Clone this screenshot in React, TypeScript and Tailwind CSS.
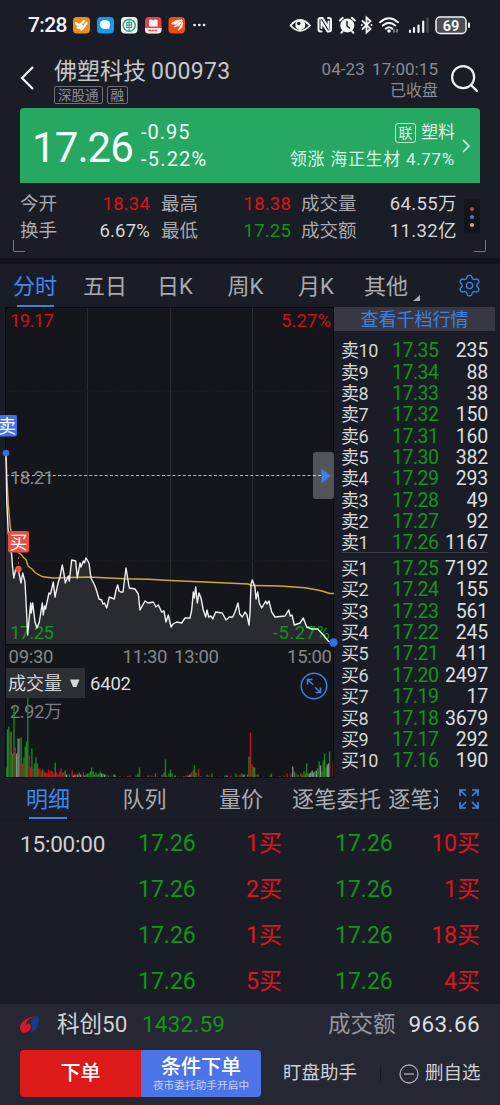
import React from 'react';
import { Settings, Search } from 'lucide-react';

interface Order {
    label: string;
    price: string;
    volume: string;
}

interface Trade {
    time: string;
    price: string;
    volume: string;
    price2: string;
    volume2: string;
}

const sells: Order[] = [
    { label: '卖10', price: '17.35', volume: '235' },
    { label: '卖9', price: '17.34', volume: '88' },
    { label: '卖8', price: '17.33', volume: '38' },
    { label: '卖7', price: '17.32', volume: '150' },
    { label: '卖6', price: '17.31', volume: '160' },
    { label: '卖5', price: '17.30', volume: '382' },
    { label: '卖4', price: '17.29', volume: '293' },
    { label: '卖3', price: '17.28', volume: '49' },
    { label: '卖2', price: '17.27', volume: '92' },
    { label: '卖1', price: '17.26', volume: '1167' },
];

const buys: Order[] = [
    { label: '买1', price: '17.25', volume: '7192' },
    { label: '买2', price: '17.24', volume: '155' },
    { label: '买3', price: '17.23', volume: '561' },
    { label: '买4', price: '17.22', volume: '245' },
    { label: '买5', price: '17.21', volume: '411' },
    { label: '买6', price: '17.20', volume: '2497' },
    { label: '买7', price: '17.19', volume: '17' },
    { label: '买8', price: '17.18', volume: '3679' },
    { label: '买9', price: '17.17', volume: '292' },
    { label: '买10', price: '17.16', volume: '190' },
];

const trades: Trade[] = [
    { time: '15:00:00', price: '17.26', volume: '1买', price2: '17.26', volume2: '10买' },
    { time: '', price: '17.26', volume: '2买', price2: '17.26', volume2: '1买' },
    { time: '', price: '17.26', volume: '1买', price2: '17.26', volume2: '18买' },
    { time: '', price: '17.26', volume: '5买', price2: '17.26', volume2: '4买' },
];

const pricePoints =
    '6,453 6.7,500 8.3,533 11.7,555 12.5,566 13.8,578 15.5,570 17,568 19,573 21,583 22.7,573 25,582 26.3,607 27.7,635 29.3,617 30.7,603 31.3,613 32.7,603 35,622 37,628 39.3,622 42.3,603 43.3,615 44.5,606 45.5,609 49,593 50.5,594 53.3,582 55,597 58.3,582 60,577 62.3,565 64,574 65.3,583 68.3,576 69.3,581 71.7,560 75.7,561 77.3,578 80,563 81,567 83.3,561 84.5,563 86,558 89,563 91,578 95,586 97,592 99,599 101.7,600 103,604 104.5,603 106.7,608 109.3,597 114.3,599 116,590 117.7,585 119,591 120.7,592 123,592 126,568 129.3,588 135,589 138.3,594 140,610 145,601 148,603 153.3,602 156,607 158.3,605 161.7,612 164,611 166,622 168.3,615 171,627 173,624 176.7,622 181.7,623 185,618 190,618 191.7,610 193.3,592 194.3,598 195.7,587 197.3,603 199,593 201,598 203.3,610 205.7,617 207,610 208.7,617 211,616 212.7,619 215.7,612 222.3,613 226,620 229.3,617 232.7,617 235,612 238,603 239.7,614 242.3,617 245,612 247,615 249,625 250,613 251,584 252.3,580 255,587 256,599 257.7,592 259.3,603 261.7,608 265.7,601 267,604 269,601 271.7,612 275,617 285,616 288.7,610 290.3,616 292,615 294.3,625 300,623 303.3,618 306.7,627 311.7,629 317.7,629 323.3,635 328.3,641 332,643';

const averagePoints =
    '6,453 7,480 8.3,505 10,524 12,539 15,549 19,553 21,554.5 24,558 26,559.5 28,566 32,569 35,572.5 39,575 43,576.8 53,578 70,577.5 88,577 125,578.8 148,579.3 170,580.5 205,582 248,584 252,585.5 280,586 305,587.8 315,589.5 322,591 330,593.5 334,593.5';

// [x, height, colour]: g falling, r rising, w flat
const volumeBars: [number, number, string][] = [
    [6.5, 10, 'g'], [7.5, 48, 'g'], [8.8, 51, 'g'], [10, 45, 'r'], [11.2, 46, 'g'], [12.5, 24, 'g'], [14, 72, 'g'], [15.3, 30, 'r'], [16.7, 24, 'w'], [18.2, 39, 'w'],
    [19.6, 39, 'g'], [21.2, 40, 'g'], [22.6, 14, 'r'], [24, 20, 'g'], [25.3, 31, 'g'], [26.5, 36, 'g'], [27.8, 80, 'g'], [29.2, 22, 'r'], [30.5, 10, 'r'], [31.9, 29, 'g'],
    [33.2, 9, 'r'], [34.6, 14, 'g'], [36, 20, 'g'], [37.4, 14, 'g'], [38.7, 9, 'r'], [40, 9, 'r'], [41.4, 6, 'r'], [42.8, 8, 'g'], [44.2, 6, 'r'], [45.6, 5, 'r'],
    [47, 4, 'r'], [48.4, 8, 'r'], [49.8, 6, 'r'], [51.2, 7, 'r'], [52.6, 6, 'r'], [54, 4, 'r'], [55.3, 15, 'g'], [56.8, 5, 'r'], [58.2, 3, 'r'], [59.6, 6, 'r'],
    [61, 9, 'r'], [62.4, 5, 'r'], [63.8, 5, 'r'], [65.2, 7, 'g'], [66.6, 3, 'w'], [69.4, 3, 'g'], [72.2, 7, 'r'], [73.6, 2, 'w'], [75, 3, 'w'], [76.4, 3, 'r'],
    [77.8, 3, 'w'], [79.2, 5, 'g'], [80.6, 3, 'w'], [83.4, 6, 'r'], [84.8, 2, 'w'], [86.2, 3, 'g'], [87.6, 4, 'g'], [89, 4, 'g'], [90.4, 6, 'g'], [91.8, 10, 'g'],
    [93.2, 6, 'g'], [94.6, 3, 'g'], [96, 5, 'g'], [97.4, 3, 'g'], [98.8, 4, 'g'], [100.2, 6, 'g'], [101.6, 4, 'w'], [103, 4, 'g'], [104.4, 3, 'w'], [105.8, 3, 'g'],
    [108.6, 2, 'g'], [111.4, 1, 'r'], [114.2, 3, 'w'], [115.6, 2, 'g'], [119.8, 1, 'w'], [124, 1, 'r'], [128, 1, 'w'], [130, 2, 'r'], [136, 2, 'g'], [138, 4, 'g'], [139.5, 10, 'g'],
    [144, 1, 'r'], [148, 2, 'g'], [151, 2, 'r'], [153, 1, 'g'], [155.5, 4, 'g'], [158, 1, 'r'], [162, 3, 'g'], [164, 5, 'g'], [165.5, 18, 'g'], [167, 2, 'r'],
    [169, 4, 'g'], [170.5, 8, 'g'], [172, 4, 'g'], [175, 2, 'w'], [178, 1, 'r'], [181, 1, 'r'], [184, 1, 'w'], [186, 2, 'r'], [188, 2, 'w'], [190, 3, 'w'],
    [191.5, 5, 'r'], [193, 7, 'r'], [194.4, 12, 'g'], [196, 5, 'g'], [198.5, 9, 'r'], [201, 1, 'w'], [207, 3, 'g'], [209, 2, 'r'], [212, 4, 'g'], [215, 1, 'r'],
    [220, 1, 'r'], [225, 2, 'g'], [227, 2, 'w'], [231, 2, 'r'], [236, 4, 'g'], [238, 2, 'r'], [240, 3, 'r'], [242, 4, 'g'], [244, 3, 'w'], [247.5, 3, 'g'],
    [249, 21, 'g'], [250.5, 45, 'r'], [252, 13, 'r'], [253.3, 11, 'g'], [254.6, 10, 'g'], [256, 3, 'r'], [258, 3, 'g'], [264, 1, 'r'], [270, 2, 'g'], [271.5, 4, 'g'],
    [277, 1, 'r'], [280, 1, 'w'], [284, 2, 'r'], [287, 4, 'r'], [291, 4, 'r'], [292.8, 11, 'w'], [294.3, 6, 'g'], [296, 4, 'r'], [298, 3, 'g'], [301, 4, 'g'],
    [302.5, 3, 'r'], [304, 6, 'g'], [305.3, 4, 'g'], [306.7, 14, 'g'], [308, 4, 'g'], [309.5, 4, 'w'], [310.8, 5, 'w'], [312.2, 7, 'w'], [313.6, 5, 'w'], [315, 6, 'g'],
    [316.4, 7, 'w'], [317.8, 9, 'g'], [319.2, 16, 'g'], [320.6, 12, 'w'], [322, 6, 'g'], [323.2, 17, 'g'], [324.6, 24, 'g'], [326, 10, 'g'], [327.3, 13, 'w'], [328.6, 14, 'w'], [329.6, 26, 'g'], [333.2, 16, 'r'],
];

const barColors: Record<string, string> = { g: '#178a1f', r: '#c2161d', w: '#8d8e8e' };

function StatusIcons() {
    return (
        <svg width="182" height="22" viewBox="289 14 182 22" fill="none" stroke="#f2f3f5" strokeLinecap="round">
            {/* eye */}
            <path d="M290.5 25.5Q300 14.5 310 25.5Q300 36 290.5 25.5Z" strokeWidth="1.8" />
            <circle cx="300.3" cy="25" r="5" fill="#f2f3f5" stroke="none" />
            <circle cx="298.8" cy="23.5" r="1.7" fill="#1b1d26" stroke="none" />
            {/* nfc */}
            <path d="M321.500 31.500h-1q-2 0-2-2v-9.500q0-2 2-2h2l6 9.500v-6M328 18h1q2 0 2 2v9.500q0 2-2 2h-1.500l-6-9.500v6" strokeWidth="2" />
            {/* alarm */}
            <circle cx="347.3" cy="25.5" r="7" fill="#f2f3f5" stroke="none" />
            <path d="M339.8 20.5l3-2.700M354.8 20.5l-3-2.700M342.5 31.5l-1.200 1.300M352.2 31.5l1.200 1.300" strokeWidth="2" />
            <path d="M347 21.5v4.500l2.500 2" stroke="#1b1d26" strokeWidth="1.5" />
            {/* bluetooth */}
            <path d="M362.5 21l8 8-4 3.500V17.500l4 3.500-8 8" strokeWidth="1.8" />
            <path d="M361.8 25h.1M371.4 25h.1" strokeWidth="1.8" />
            {/* wifi */}
            <path d="M380 22.2q9-8 18 0M382.8 25.6q6.200-5.400 12.400 0M385.8 28.6q3.200-2.600 6.400 0" strokeWidth="2" />
            <circle cx="389" cy="31" r="1.8" fill="#f2f3f5" stroke="none" />
            <path d="M394 29.5v2.500M397 29.500v2.500" strokeWidth="1.4" stroke="#a1a3a8" />
            {/* signal */}
            <path d="M410 30.5v1.500M414 28v4M418.5 25.5v6.500M423.2 21.5v10.500" strokeWidth="2.2" />
            <path d="M427.5 18.5v13.500" strokeWidth="2.2" stroke="#4b4d55" />
            {/* battery */}
            <rect x="436" y="17" width="30" height="16.5" rx="4" fill="#4b4d55" strokeWidth="1.5" />
            <path d="M469 23.5v3.500" strokeWidth="2" />
            <text x="451" y="30.5" fontSize="14.5" fontWeight="700" textAnchor="middle" fill="#f2f3f5" stroke="none">69</text>
        </svg>
    );
}

function AppIcons() {
    return (
        <svg width="135" height="18" viewBox="72 16 135 18" fill="none" strokeLinecap="round">
            <rect x="73" y="17" width="17" height="16.5" rx="4" fill="#ea8d1f" />
            <path d="M76 23q2 3 4.500 1.500l3.500-3.500M77.500 27.500q2.500 1 4.500-1.500M81.500 29.500q1 0 5-6.500" stroke="#fff" strokeWidth="2.3" strokeLinejoin="round" />
            <rect x="97" y="17" width="17" height="16.5" rx="4" fill="#1598ee" />
            <ellipse cx="105" cy="24.5" rx="5.2" ry="4.5" fill="#fff" />
            <path d="M106 27l3.500 2.500-.3-4z" fill="#fff" />
            <rect x="121" y="17" width="16.5" height="16.5" rx="4" fill="#f2f7f4" />
            <circle cx="129.2" cy="25.2" r="6" stroke="#37a58a" strokeWidth="1.5" />
            <path d="M129.2 20v10.500M126.8 22.500v5h4.800v-5zM126.800 25h4.800" stroke="#37a58a" strokeWidth="1.200" />
            <rect x="145" y="17" width="16.5" height="16.5" rx="4" fill="#e8404c" />
            <path d="M145 28h16.500v2q0 3.500-4 3.500h-8.500q-4 0-4-3.500z" fill="#f7e7e8" />
            <path d="M149 20q2.500-1 4.200.4 1.800-1.400 4.300-.4v6.500h-8.500z" fill="#fff" />
            <path d="M149 30.5h9" stroke="#e8404c" strokeWidth="1.6" strokeDasharray="1.2 2" />
            <rect x="168.5" y="17" width="16.5" height="16.5" rx="4" fill="#ef4b12" />
            <path d="M171.5 23.5q4-4 10.500-3.500l-6 4zM174.5 26.5l8-6-3.500 5zM178.5 30l4-8-.5 5z" fill="#fff" stroke="#fff" strokeWidth=".8" strokeLinejoin="round" />
            <path d="M194.5 25h.1M199.3 25h.1M204 25h.1" stroke="#f2f3f5" strokeWidth="2.600" />
        </svg>
    );
}

function PriceChart() {
    return (
        <svg className="block overflow-visible" width="334" height="361" viewBox="0 307 334 361">
            <rect x="5" y="307" width="329" height="361" fill="#15161b" />
            <path d="M87.5 308V644M170.5 308V644M252.5 308V644" stroke="#2c2d33" />
            <path d="M6 391.5H333M6 560.5H333" stroke="#202127" strokeDasharray="1 2" />
            <polygon points={`6,644 ${pricePoints} 333,644`} fill="#2a2b30" />
            <path d="M5.5 668V307.5H333.5V668M5 644.5H334" stroke="#0a0b0f" fill="none" />
            <g fontSize="18.5">
                <text x="10" y="326.5" fill="#d40d14" textLength="44">19.17</text>
                <text x="281" y="326.5" fill="#d40d14" textLength="50">5.27%</text>
                <text x="10" y="483.5" fill="#8b8c90" textLength="44">18.21</text>
                <text x="10" y="639" fill="#0f9818" textLength="44">17.25</text>
                <text x="273" y="639" fill="#0f9018" textLength="57">-5.27%</text>
            </g>
            <path d="M6 475.5H333" stroke="#b7b8ba" strokeDasharray="3 2.2" />
            <rect x="313" y="452" width="21" height="47" rx="3" fill="#5e5f63" fillOpacity=".85" />
            <path d="M313 475.5h8" stroke="#d0d1d3" strokeDasharray="3 2.2" />
            <path d="M321.5 468.5L330.5 476L321.5 483.5Z" fill="#3b82f0" />
            <polyline points={averagePoints} fill="none" stroke="#cda93c" strokeWidth="1.4" />
            <polyline points={pricePoints} fill="none" stroke="#f0f0f0" strokeWidth="1.4" strokeLinejoin="round" />
            <path d="M18.5 552v15" stroke="#b33a32" strokeDasharray="2 3" />
            <circle cx="6" cy="453" r="3.3" fill="#3d6be0" />
            <circle cx="18.5" cy="569" r="3.2" fill="#ee4f42" />
            <circle cx="333.5" cy="642.5" r="4.2" fill="#2f6fe2" />
            <rect x="-5" y="415" width="22" height="21.5" rx="2" fill="#4471e8" />
            <text x="-2" y="432.5" fontSize="18" fill="#fff">卖</text>
            <rect x="8" y="531" width="21" height="21.5" rx="2" fill="#e84e42" />
            <text x="9.5" y="548.5" fontSize="18" fill="#fff">买</text>
            <g fontSize="18.5" fill="#86878c">
                <text x="8.5" y="662.5" textLength="45">09:30</text>
                <text x="122.5" y="662.5" textLength="45">11:30</text>
                <text x="174" y="662.5" textLength="45">13:00</text>
                <text x="287" y="662.5" textLength="45">15:00</text>
            </g>
        </svg>
    );
}

function VolumeChart() {
    return (
        <svg className="block" width="334" height="110" viewBox="0 668 334 110">
            <rect x="5" y="668" width="329" height="110" fill="#15161b" />
            <text x="10" y="717.5" fontSize="18" fill="#7d7e82" textLength="52">2.92万</text>
            {volumeBars.map(([x, h, c], i) => (
                <rect key={i} x={x - 0.7} y={777.5 - h} width="1.35" height={h} fill={barColors[c]} />
            ))}
            <path d="M5.5 668V777.5H333.5V668M5 667.5H334" stroke="#0a0b0f" fill="none" />
            <rect x="6" y="668" width="79" height="30" fill="#2e2f34" />
            <text x="8" y="689.5" fontSize="18" fill="#d5d6d9">成交量</text>
            <path d="M70 679.5H79.5L76.5 687H73Z" fill="#d5d6d9" />
            <text x="90" y="689.5" fontSize="18.5" fill="#dcdde0" textLength="41">6402</text>
            <g fill="none" stroke="#3f7fdf" strokeWidth="1.5">
                <circle cx="314" cy="686" r="12.8" />
                <path d="M307.5 684.5v-5h5M307.5 679.5l5.800 5.200M320.5 687.5v5h-5M320.5 692.5l-5.500-5.200" />
            </g>
        </svg>
    );
}

function OrderRows({ orders }: { orders: Order[] }) {
    return (
        <div>
            {orders.map((order) => (
                <div key={order.label} className="flex h-[21.35px] items-center text-[19.5px] leading-[21px]">
                    <span className="w-[51px] text-[18px] text-[#d5d6da] tracking-[-0.4px]">{order.label}</span>
                    <span className="w-[50px] text-[#11951b] tracking-[-0.5px]">{order.price}</span>
                    <span className="flex-1 text-right text-[#dcdde0] tracking-[-0.2px]">{order.volume}</span>
                </div>
            ))}
        </div>
    );
}

export default function App() {
    return (
        <div className="flex h-[1105px] w-[500px] flex-col overflow-hidden bg-[#1b1d26] font-[Roboto,'Noto_Sans_CJK_SC',sans-serif] whitespace-nowrap text-[#a9aab0]">
            {/* Status bar */}
            <div className="flex h-[50px] shrink-0 items-center justify-between pr-[29px] pl-7">
                <div className="flex items-center gap-[5px] text-[#f2f3f5]">
                    <span className="w-[39px] pt-[2px] text-[21px] font-medium tracking-[-0.6px]">7:28</span>
                    <AppIcons />
                </div>
                <StatusIcons />
            </div>

            {/* Title */}
            <div className="flex h-[58px] shrink-0 pr-[19px] pl-[19px]">
                <svg className="mt-[14px] w-[35px]" height="28" viewBox="0 0 35 28" fill="none" stroke="#f2f3f5" strokeWidth="2.2">
                    <path d="M14 3L3 14L14 25" />
                </svg>
                <div className="flex-1 pt-2">
                    <div className="flex h-7 items-center gap-[5px] text-[23px] leading-7 text-[#c6c7cb]">
                        <span>佛塑科技</span>
                        <span className="tracking-[0.3px]">000973</span>
                    </div>
                    <div className="flex gap-1 text-[13.5px] leading-4 text-[#8c8e96]">
                        <span className="h-[18px] rounded-[2px] border border-[#6c6e76] px-[3px]">深股通</span>
                        <span className="h-[18px] rounded-[2px] border border-[#6c6e76] px-[3px]">融</span>
                    </div>
                </div>
                <div className="pt-2 text-right text-[#898b93]">
                    <div className="h-[22px] text-[17px] leading-[22px] tracking-[0.05px] [word-spacing:3px]">04-23 17:00:15</div>
                    <div className="h-[21px] text-[16px] leading-[21px]">已收盘</div>
                </div>
                <Search className="mt-3 ml-2.5 h-[33px] w-[33px] text-[#eeeff1]" strokeWidth={1.6} />
            </div>

            {/* Price banner */}
            <div className="mx-5 flex h-[75px] shrink-0 items-center rounded-t-[4px] bg-[#27a862] pr-[9px] pl-3 text-[#f3fbf6]">
                <div className="w-[109px] pt-1 text-[42px] leading-none tracking-[-0.9px]">17.26</div>
                <div className="flex-1 pt-px text-[20px] leading-[27px]">
                    <div className="tracking-[1px]">-0.95</div>
                    <div className="tracking-[1.2px]">-5.22%</div>
                </div>
                <div className="pt-px text-right text-[17px] leading-[27px] text-[#d9f2e4]">
                    <div className="flex items-center justify-end gap-[5px]">
                        <span className="h-5 w-[21px] rounded-[3px] border border-[#bfe6cf] text-center text-[14px] leading-[18px]">联</span>
                        <span>塑料</span>
                    </div>
                    <div className="tracking-[0.7px]">领涨 海正生材 4.77%</div>
                </div>
                <svg className="ml-[7px]" width="9" height="16" viewBox="0 0 9 16" fill="none" stroke="#d9f2e4" strokeWidth="1.6">
                    <path d="M1 2L7 8L1 14" />
                </svg>
            </div>

            {/* Daily stats */}
            <div className="relative flex h-[75px] shrink-0 pt-2 pl-5 text-[18.5px] leading-[27px]">
                <div className="w-[82px]">
                    <div>今开</div>
                    <div>换手</div>
                </div>
                <div className="flex w-12 flex-col items-end tracking-[0.2px]">
                    <div className="text-[#d8141b]">18.34</div>
                    <div className="text-[#d5d6da]">6.67%</div>
                </div>
                <div className="ml-[11px] w-[82px]">
                    <div>最高</div>
                    <div>最低</div>
                </div>
                <div className="flex w-12 flex-col items-end tracking-[0.2px]">
                    <div className="text-[#d8141b]">18.38</div>
                    <div className="text-[#11951b]">17.25</div>
                </div>
                <div className="ml-2.5 w-[77px]">
                    <div>成交量</div>
                    <div>成交额</div>
                </div>
                <div className="w-[79px] text-right tracking-[0.4px] text-[#d5d6da]">
                    <div>64.55万</div>
                    <div>11.32亿</div>
                </div>
                <div className="mt-[8px] ml-[7px] flex h-[35px] w-4 flex-col items-center justify-center gap-1 rounded-[2px] bg-[#14151b]">
                    <i className="h-1 w-1 rounded-full bg-[#c8473d]" />
                    <i className="h-1 w-1 rounded-full bg-[#3b7fe6]" />
                    <i className="h-1 w-1 rounded-full bg-[#cfa88c]" />
                </div>
                <div className="absolute top-[57px] left-[13px] h-3 w-3 rounded-bl-[2px] border-b border-l border-[#777980]" />
                <div className="absolute top-[57px] right-[14px] h-3 w-3 rounded-br-[2px] border-r border-b border-[#777980]" />
            </div>
            <div className="h-[6px] shrink-0 bg-[#12131a]" />

            {/* Period tabs */}
            <div className="flex h-[43px] shrink-0 text-center text-[22px] leading-[46px]">
                <div className="flex w-[70px] flex-col items-center text-[#3f86ee]">
                    <span className="h-[41px]">分时</span>
                    <span className="h-[2px] w-[37px] bg-[#3f7fdf]" />
                </div>
                <div className="w-[70px]">五日</div>
                <div className="w-[70px]">日K</div>
                <div className="w-[71px]">周K</div>
                <div className="w-[70px]">月K</div>
                <div className="flex w-[70px] justify-center">其他</div>
                <svg className="-ml-2 mt-[31px]" width="7" height="6" viewBox="0 0 7 6">
                    <path d="M7 0V6H0Z" fill="#a9aab0" />
                </svg>
                <Settings className="mt-[9px] ml-[37px] h-[25px] w-[25px] text-[#3f7fdf]" strokeWidth={1.3} />
            </div>

            {/* Charts and order book */}
            <div className="flex h-[471px] shrink-0">
                <div className="w-[334px]">
                    <PriceChart />
                    <VolumeChart />
                </div>
                <div className="flex-1">
                    <div className="mr-[5px] h-6 bg-[#373843] text-center text-[18px] leading-[26px] text-[#3f82e6]">查看千档行情</div>
                    <div className="mr-3 ml-[7px] pt-[9px]">
                        <OrderRows orders={sells} />
                        <div className="-mt-px h-px bg-[#3d3f48]" />
                        <div className="h-[4.5px]" />
                        <OrderRows orders={buys} />
                    </div>
                </div>
            </div>

            {/* Detail tabs */}
            <div className="flex h-[42px] shrink-0 border-b border-[#171820] text-[22px] leading-[44px]">
                <div className="flex w-[96px] flex-col items-center text-[#3f86ee]">
                    <span className="h-[39px]">明细</span>
                    <span className="h-[2px] w-[38px] bg-[#3f7fdf]" />
                </div>
                <div className="w-[97px] text-center">队列</div>
                <div className="w-[96px] text-center">量价</div>
                <div className="ml-[3px] w-[146px] overflow-hidden tracking-[0.3px]">
                    <span>逐笔委托</span>
                    <span className="ml-[7px]">逐笔还原</span>
                </div>
                <svg className="mt-[10px] ml-[20px]" width="22" height="22" viewBox="0 0 22 22" fill="none" stroke="#3f82e6" strokeWidth="1.7">
                    <path d="M2 8V2H8M2 2L8 8M14 2H20V8M20 2L14 8M2 14V20H8M2 20L8 14M20 14V20H14M20 20L14 14" />
                </svg>
            </div>

            {/* Trades */}
            <div className="h-[184px] shrink-0 pt-px">
                {trades.map((trade, i) => (
                    <div key={i} className="flex h-[46px] items-center pr-5 pl-5 text-[23px] leading-[46px]">
                        <span className="w-[118px] text-[22.5px] text-[#d0d1d5] tracking-[-0.2px]">{trade.time}</span>
                        <span className="w-[59px] text-[#11951b]">{trade.price}</span>
                        <span className="w-[85px] text-right text-[#e0141f]">{trade.volume}</span>
                        <span className="ml-[53px] w-[60px] text-[#11951b]">{trade.price2}</span>
                        <span className="flex-1 text-right text-[#e0141f]">{trade.volume2}</span>
                    </div>
                ))}
            </div>

            {/* Index ticker and actions */}
            <div className="flex flex-1 flex-col bg-[#252732]">
                <div className="flex h-[41px] items-center pr-5 pl-5 text-[22.5px]">
                    <svg className="mr-[16px]" width="21" height="20" viewBox="0 0 21 20">
                        <path d="M10 18C15 17 20 11 18.5 1C13 1 10 5 11.5 10C12 13 11.5 16 10 18Z" fill="#173a91" />
                        <path d="M18 1C8 1 0 7 0 13C0 17 3 18.5 6 17.5C10 16 12 12 10 9C8 7 6 9 7 11C4 9 8 2 18 1Z" fill="#df1327" />
                    </svg>
                    <span className="w-[85px] text-[#d0d1d5]">科创50</span>
                    <span className="flex-1 text-[#11951b] tracking-[0.2px]">1432.59</span>
                    <span className="mr-[13px] text-[#94969e]">成交额</span>
                    <span className="text-[#dcdde0] tracking-[0.4px]">963.66</span>
                </div>
                <div className="flex h-[60px] items-start pt-[5px] pl-5 text-[18.5px] leading-[47px] text-[#cfd0d5]">
                    <div className="flex h-[47px] w-[241px] shrink-0 overflow-hidden rounded-[4px] text-white">
                        <button className="w-[121px] bg-[#dc1a1a] text-[20px] font-medium">下单</button>
                        <button className="flex w-[120px] flex-col items-center justify-center bg-[#4b74e8]">
                            <span className="text-[20px] leading-6 font-medium">条件下单</span>
                            <span className="text-[10.7px] leading-[13px] text-[#c4d1f7]">夜市委托助手开启中</span>
                        </button>
                    </div>
                    <span className="ml-[22px] w-[97px]">盯盘助手</span>
                    <span className="mt-4 h-4 w-px bg-[#191b23]" />
                    <svg className="mt-[14px] mr-[6px] ml-[18px]" width="20" height="20" viewBox="0 0 20 20" fill="none" stroke="#a9aab0" strokeWidth="1.3">
                        <circle cx="10" cy="10" r="9" />
                        <path d="M5 10H15" />
                    </svg>
                    <span>删自选</span>
                </div>
            </div>
        </div>
    );
}
